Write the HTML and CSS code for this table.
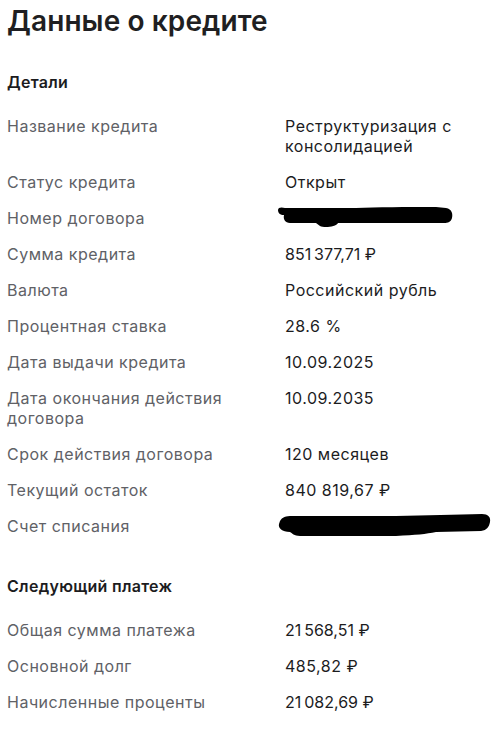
FILE: index.html
```html
<!DOCTYPE html>
<html lang="ru">
<head>
<meta charset="utf-8">
<link rel="stylesheet" href="styles.css">
</head>
<body>
<main class="page">
  <h1 class="title">Данные о кредите</h1>

  <section class="section">
    <h2 class="section-title">Детали</h2>
    <div class="rows">
      <div class="row"><div class="label">Название кредита</div><div class="value">Реструктуризация с консолидацией</div></div>
      <div class="row"><div class="label">Статус кредита</div><div class="value">Открыт</div></div>
      <div class="row"><div class="label">Номер договора</div><div class="value"><svg class="blob blob-1" width="180" height="24" viewBox="0 0 180 24"><path d="M2 4 C2 1 6 1 9 2 L80 2 C100 1 130 1 160 1 L170 2 C176 3 177 8 176 12 C175 16 172 17 168 17 L62 17 C60 21 48 22 44 20 L40 17 L14 17 C9 17 7 13 8 9 C4 9 2 7 2 4 Z" fill="#000"/></svg></div></div>
      <div class="row"><div class="label">Сумма кредита</div><div class="value">851&#8239;377,71 ₽</div></div>
      <div class="row"><div class="label">Валюта</div><div class="value">Российский рубль</div></div>
      <div class="row"><div class="label">Процентная ставка</div><div class="value">28.6 %</div></div>
      <div class="row"><div class="label">Дата выдачи кредита</div><div class="value">10.09.2025</div></div>
      <div class="row"><div class="label">Дата окончания действия договора</div><div class="value">10.09.2035</div></div>
      <div class="row"><div class="label">Срок действия договора</div><div class="value">120 месяцев</div></div>
      <div class="row"><div class="label">Текущий остаток</div><div class="value">840 819,67 ₽</div></div>
      <div class="row"><div class="label">Счет списания</div><div class="value"><svg class="blob blob-2" width="216" height="26" viewBox="0 0 216 26"><path d="M4 9 C6 5 10 4 16 4 L120 4 C150 3 180 3 206 2 C212 2 215 5 214 10 C213 15 211 18 205 19 L160 20 C150 22 140 23 120 24 L24 24 C18 24 16 21 14 20 C6 20 2 16 3 12 Z" fill="#000"/></svg></div></div>
    </div>
  </section>

  <section class="section section-next">
    <h2 class="section-title">Следующий платеж</h2>
    <div class="rows">
      <div class="row"><div class="label">Общая сумма платежа</div><div class="value">21&#8239;568,51 ₽</div></div>
      <div class="row"><div class="label">Основной долг</div><div class="value">485,82 ₽</div></div>
      <div class="row"><div class="label">Начисленные проценты</div><div class="value">21&#8239;082,69 ₽</div></div>
    </div>
  </section>
</main>
</body>
</html>
```

FILE: styles.css
```css
* { box-sizing: border-box; }
html, body {
  margin: 0;
  padding: 0;
  background: #ffffff;
}
body {
  font-family: Inter, "Noto Sans", "Liberation Sans", sans-serif;
  color: #1c1c1e;
}
.page {
  padding: 4px 7px 0 7px;
  width: 494px;
}
.title {
  margin: 0;
  font-size: 28px;
  line-height: 34px;
  font-weight: 600;
  letter-spacing: 0.1px;
  color: #1f1f22;
}
.section {
  margin-top: 34px;
}
.section-next {
  margin-top: 40px;
}
.section-title {
  margin: 0;
  font-size: 16px;
  line-height: 20px;
  font-weight: 600;
  letter-spacing: 0.3px;
  color: #1c1c1e;
}
.rows {
  margin-top: 24px;
  display: flex;
  flex-direction: column;
  gap: 16px;
}
.row {
  display: grid;
  grid-template-columns: 278px 1fr;
  font-size: 16px;
  line-height: 20px;
  letter-spacing: 0.5px;
}
.label {
  color: #606166;
  padding-right: 40px;
}
.value {
  color: #1c1c1e;
  padding-right: 14px;
}
.blob {
  display: block;
  margin-left: -9px;
}
.blob-1 { margin-top: -2px; margin-bottom: -2px; }
.blob-2 { margin-top: -4px; margin-bottom: -2px; }
```
